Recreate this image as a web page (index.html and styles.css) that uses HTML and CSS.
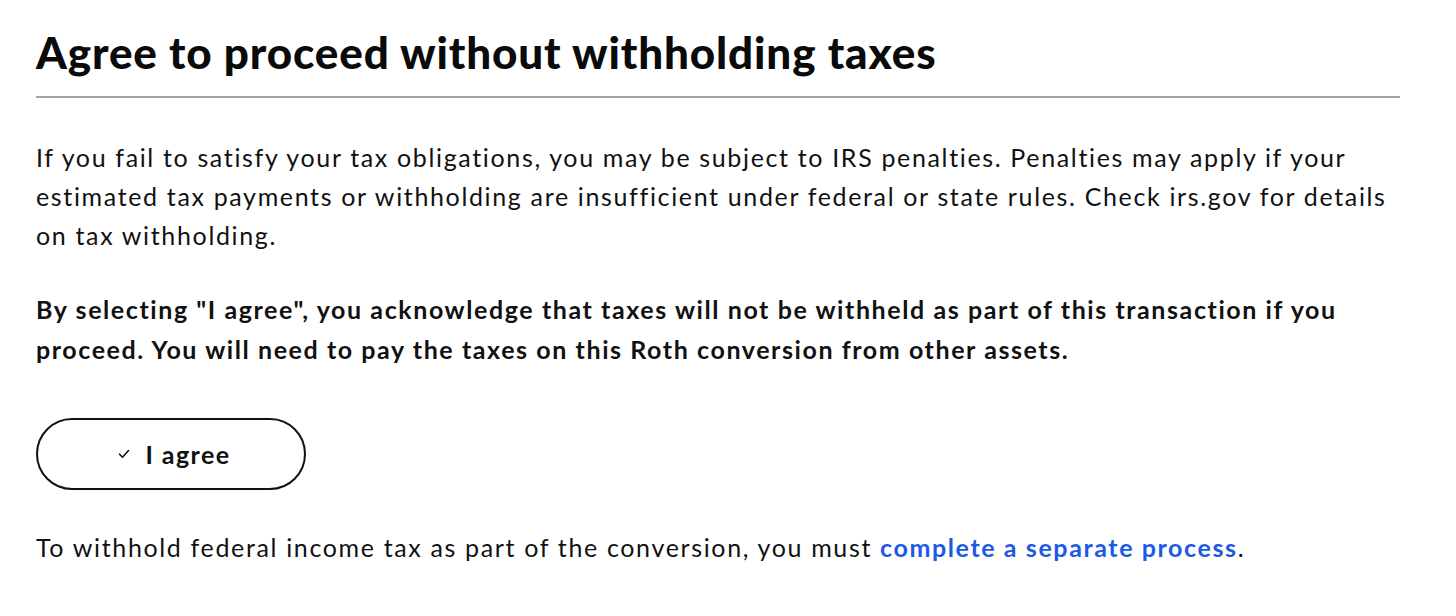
FILE: index.html
```html
<!DOCTYPE html>
<html lang="en">
<head>
<meta charset="utf-8">
<title>Agree to proceed without withholding taxes</title>
<link rel="stylesheet" href="styles.css">
</head>
<body>
<main class="page">
  <h1 class="title">Agree to proceed without withholding taxes</h1>
  <hr class="divider">
  <p class="text">If you fail to satisfy your tax obligations, you may be subject to IRS penalties. Penalties may apply if your estimated tax payments or withholding are insufficient under federal or state rules. Check irs.gov for details on tax withholding.</p>
  <p class="text strong">By selecting "I agree", you acknowledge that taxes will not be withheld as part of this transaction if you proceed. You will need to pay the taxes on this Roth conversion from other assets.</p>
  <button class="agree" type="button">
    <svg class="check" width="12" height="10" viewBox="0 0 12 10" aria-hidden="true"><path d="M1.5 5.2 L4.5 8.2 L10.5 1.5" fill="none" stroke="#111" stroke-width="1.6" stroke-linecap="round" stroke-linejoin="round"/></svg>
    <span>I agree</span>
  </button>
  <p class="text note">To withhold federal income tax as part of the conversion, you must <a class="link" href="#">complete a separate process</a>.</p>
</main>
</body>
</html>
```
FILE: styles.css
```css
html, body {
  margin: 0;
  padding: 0;
  background: #ffffff;
}
body {
  font-family: Lato, "Noto Sans", sans-serif;
  color: #111111;
}
.page {
  padding: 22px 56px 0 36px;
}
.title {
  margin: 0;
  font-size: 44px;
  line-height: 60px;
  font-weight: 900;
  letter-spacing: 0.85px;
  color: #0a0a0a;
}
.divider {
  margin: 14px 0 0 0;
  border: 0;
  height: 2px;
  background: #a3a3a3;
}
.text {
  margin: 0;
  font-size: 25px;
  line-height: 39px;
  letter-spacing: 1.65px;
}
.divider + .text {
  margin-top: 40px;
}
.strong {
  margin-top: 34px;
  font-weight: 700;
  line-height: 40px;
  letter-spacing: 1.58px;
}
.agree {
  margin-top: 49px;
  width: 270px;
  height: 72px;
  border: 2px solid #111;
  border-radius: 36px;
  background: #fff;
  display: flex;
  align-items: center;
  justify-content: center;
  gap: 16px;
  font-family: inherit;
  font-size: 25px;
  font-weight: 700;
  letter-spacing: 1.4px;
  color: #111;
  padding: 0 0 0 6px;
}
.note {
  margin-top: 38px;
}
.link {
  color: #1a5ae6;
  font-weight: 700;
  text-decoration: none;
  letter-spacing: 1.6px;
}
```
